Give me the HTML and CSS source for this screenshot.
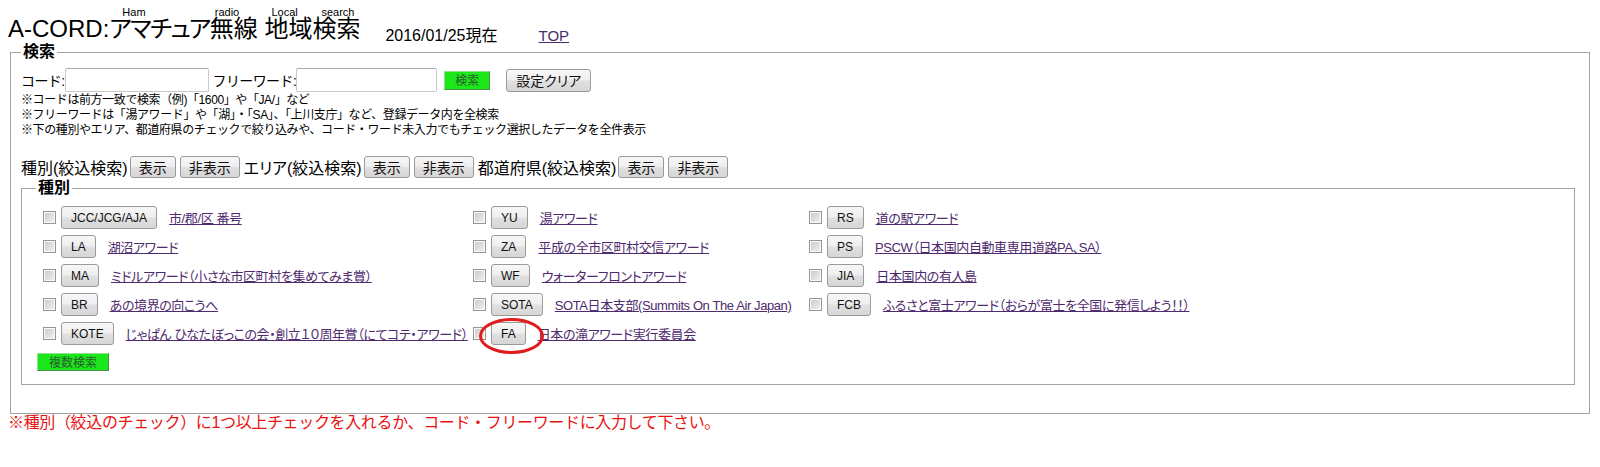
FILE: index.html
```html
<!DOCTYPE html>
<html lang="ja">
<head>
<meta charset="utf-8">
<title>A-CORD:アマチュア無線 地域検索</title>
<link rel="stylesheet" href="styles.css">
</head>
<body>
<header class="head">
  <h1 class="title"><span class="lat">A-CORD:</span><span class="w kana">アマチュア<span class="an an-ham">Ham</span></span><span class="w">無線<span class="an an-radio">radio</span></span> <span class="w">地域<span class="an an-local">Local</span></span><span class="w">検索<span class="an an-search">search</span></span></h1>
  <span class="date">2016/01/25現在</span>
  <a class="top" href="#">TOP</a>
</header>
<form class="form" action="#">
  <fieldset class="outer">
    <legend>検索</legend>
    <div class="searchrow">
      <label class="lbl">コード:</label><input type="text" class="inp inp-code">
      <label class="lbl lbl-free">フリーワード:</label><input type="text" class="inp inp-free">
      <button type="button" class="green green-search">検索</button>
      <button type="button" class="btn btn-clear">設定クリア</button>
    </div>
    <div class="notes">
      <p>※コードは前方一致で検索（例)「1600」や「JA/」など</p>
      <p>※フリーワードは「湯アワード」や「湖」・「SA」、「上川支庁」など、登録データ内を全検索</p>
      <p>※下の種別やエリア、都道府県のチェックで絞り込みや、コード・ワード未入力でもチェック選択したデータを全件表示</p>
    </div>
    <div class="toggles">
      <span class="tlabel">種別(絞込検索)</span><button type="button" class="btn tbtn">表示</button><button type="button" class="btn tbtn">非表示</button>
      <span class="tlabel">エリア(絞込検索)</span><button type="button" class="btn tbtn">表示</button><button type="button" class="btn tbtn">非表示</button>
      <span class="tlabel">都道府県(絞込検索)</span><button type="button" class="btn tbtn">表示</button><button type="button" class="btn tbtn">非表示</button>
    </div>
    <fieldset class="inner">
      <legend>種別</legend>
      <div class="grid">
        <div class="cell"><input type="checkbox" class="cb"><button type="button" class="btn kbtn">JCC/JCG/AJA</button><a href="#">市/郡/区 番号</a></div>
        <div class="cell"><input type="checkbox" class="cb"><button type="button" class="btn kbtn">YU</button><a href="#">湯アワード</a></div>
        <div class="cell"><input type="checkbox" class="cb"><button type="button" class="btn kbtn">RS</button><a href="#">道の駅アワード</a></div>

        <div class="cell"><input type="checkbox" class="cb"><button type="button" class="btn kbtn">LA</button><a href="#">湖沼アワード</a></div>
        <div class="cell"><input type="checkbox" class="cb"><button type="button" class="btn kbtn">ZA</button><a href="#">平成の全市区町村交信アワード</a></div>
        <div class="cell"><input type="checkbox" class="cb"><button type="button" class="btn kbtn">PS</button><a href="#">PSCW（日本国内自動車専用道路PA、SA）</a></div>

        <div class="cell"><input type="checkbox" class="cb"><button type="button" class="btn kbtn">MA</button><a href="#">ミドルアワード（小さな市区町村を集めてみま賞）</a></div>
        <div class="cell"><input type="checkbox" class="cb"><button type="button" class="btn kbtn">WF</button><a href="#">ウォーターフロントアワード</a></div>
        <div class="cell"><input type="checkbox" class="cb"><button type="button" class="btn kbtn">JIA</button><a href="#">日本国内の有人島</a></div>

        <div class="cell"><input type="checkbox" class="cb"><button type="button" class="btn kbtn">BR</button><a href="#">あの境界の向こうへ</a></div>
        <div class="cell"><input type="checkbox" class="cb"><button type="button" class="btn kbtn">SOTA</button><a href="#">SOTA日本支部(Summits On The Air Japan)</a></div>
        <div class="cell"><input type="checkbox" class="cb"><button type="button" class="btn kbtn">FCB</button><a href="#">ふるさと富士アワード（おらが富士を全国に発信しよう！！）</a></div>

        <div class="cell"><input type="checkbox" class="cb"><button type="button" class="btn kbtn">KOTE</button><a href="#">じゃぱん ひなたぼっこの会・創立１０周年賞（にてコテ・アワード）</a></div>
        <div class="cell"><input type="checkbox" class="cb"><span class="circled"><button type="button" class="btn kbtn">FA</button></span><a href="#">日本の滝アワード実行委員会</a></div>
        <div class="cell"></div>
      </div>
      <button type="button" class="green multi">複数検索</button>
    </fieldset>
  </fieldset>
</form>
<p class="msg">※種別（絞込のチェック）に1つ以上チェックを入れるか、コード・フリーワードに入力して下さい。</p>
</body>
</html>
```

FILE: styles.css
```css
* { box-sizing: border-box; }

body {
  margin: 8px;
  background: #fff;
  color: #000;
  font-family: "Liberation Sans", "Noto Sans CJK JP", sans-serif;
  font-size: 14px;
}

a { color: #4e2a6e; }

/* header */
.head {
  display: flex;
  align-items: flex-end;
  padding-top: 7px;
}
.title {
  margin: 0;
  font-size: 24px;
  line-height: 28px;
  font-weight: normal;
  white-space: nowrap;
}
.w { position: relative; }
.kana {
  font-feature-settings: "palt";
  letter-spacing: -1.5px;
}
.an {
  position: absolute;
  top: -8px;
  font-size: 11px;
  line-height: 10px;
  letter-spacing: 0;
  white-space: nowrap;
  font-feature-settings: normal;
}
.an-ham { left: 13px; }
.an-radio { left: 5px; }
.an-local { left: 7px; }
.an-search { left: 9px; }

.date {
  margin-left: 25px;
  margin-bottom: -2px;
  font-size: 16px;
  line-height: 18px;
}
.top {
  margin-left: 41px;
  margin-bottom: -2px;
  font-size: 15px;
  line-height: 18px;
}

/* fieldsets */
.form { margin: 0; }
.outer {
  margin: 0 2px;
  padding: 0 10px 28px;
  border: 1px solid #a3a3a3;
  min-width: 0;
}
.outer > legend,
.inner > legend {
  padding: 0 2px;
  font-size: 16px;
  line-height: 18px;
  font-weight: bold;
}

/* buttons */
.btn {
  margin: 0;
  border: 1px solid #9a9a9a;
  border-radius: 3px;
  background: linear-gradient(#f7f7f7 0%, #eeeeee 48%, #e0e0e0 52%, #d6d6d6 100%);
  color: #111;
  font-family: "Liberation Sans", "Noto Sans CJK JP", sans-serif;
  cursor: pointer;
}
.green {
  margin: 0;
  border: 1px solid;
  border-color: #8fe08f #4d8f4d #4d8f4d #8fe08f;
  background: #1be81b;
  color: #2d5a2d;
  font-family: "Noto Sans CJK JP", sans-serif;
  font-size: 12px;
  line-height: 16px;
  cursor: pointer;
}

/* search row */
.searchrow {
  display: flex;
  align-items: center;
  height: 26px;
  margin-top: 6px;
}
.lbl {
  font-size: 14px;
  letter-spacing: -0.6px;
}
.lbl-free { margin-left: 4px; }
.inp {
  height: 24px;
  margin: 0;
  padding: 0 2px;
  border: 1px solid #c9c9c9;
  border-top-color: #a9a9a9;
  border-radius: 2px;
  font-family: inherit;
  font-size: 13px;
}
.inp-code { width: 144px; }
.inp-free { width: 141px; }
.green-search {
  margin-left: 7px;
  height: 19px;
  padding: 0 10px;
}
.btn-clear {
  margin-left: 16px;
  height: 23px;
  padding: 0 9px;
  font-size: 14px;
  font-feature-settings: "palt";
}

/* notes */
.notes {
  font-size: 12px;
  line-height: 15px;
  letter-spacing: -0.4px;
}
.notes p { margin: 0; }

/* toggles */
.toggles {
  display: flex;
  align-items: center;
  height: 24px;
  margin-top: 17px;
}
.tlabel {
  font-size: 16px;
  font-feature-settings: "palt";
  margin-left: 4px;
}
.tlabel:first-child { margin-left: 0; }
.tbtn {
  height: 22px;
  padding: 0 8px;
  font-size: 14px;
  margin-left: 2px;
}
.tbtn + .tbtn { margin-left: 4px; }

/* inner fieldset */
.inner {
  margin: 0 4px 0 0;
  padding: 0 13px 13px 14px;
  border: 1px solid #a3a3a3;
  min-width: 0;
}
.grid {
  display: grid;
  grid-template-columns: 428px 334px 400px;
  gap: 2px;
  margin: 7px 0 0 2px;
}
.cell {
  display: flex;
  align-items: center;
  height: 27px;
  padding: 1px;
  white-space: nowrap;
}
.cb {
  appearance: none;
  -webkit-appearance: none;
  width: 13px;
  height: 13px;
  margin: 0 5px 0 4px;
  border: 1px solid #959595;
  background: linear-gradient(135deg, #c8c8c8 0%, #f3f3f3 100%);
  box-shadow: inset 0 0 0 1px #fafafa;
  flex: none;
}
.kbtn {
  height: 23px;
  padding: 0 9px;
  margin-right: 12px;
  font-size: 12px;
}
.cell a {
  font-size: 13px;
  font-feature-settings: "palt";
  letter-spacing: -0.4px;
}

.circled {
  position: relative;
  display: inline-flex;
}
.circled::after {
  content: "";
  position: absolute;
  left: -12px;
  right: -6px;
  top: -4px;
  bottom: -9px;
  border: 3px solid #e21c1c;
  border-radius: 50%;
  pointer-events: none;
}

.multi {
  display: block;
  height: 18px;
  margin: 6px 0 0 1px;
  padding: 0 11px;
}

/* message */
.msg {
  margin: 0;
  font-size: 16px;
  line-height: 18px;
  color: #e81010;
  letter-spacing: -0.35px;
}
```
